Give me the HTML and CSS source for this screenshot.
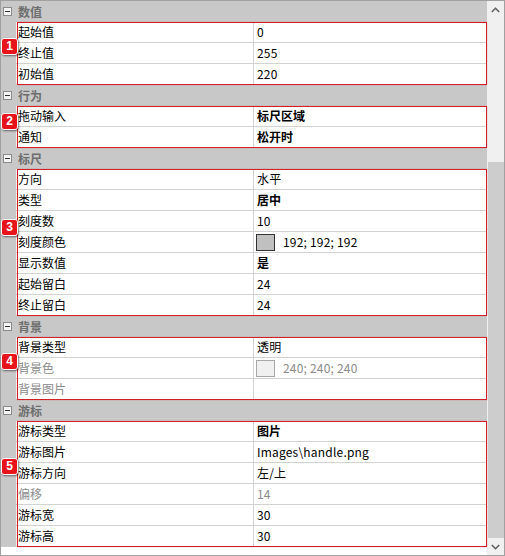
FILE: index.html
```html
<!DOCTYPE html>
<html lang="zh">
<head>
<meta charset="utf-8">
<link rel="stylesheet" href="styles.css">
</head>
<body>
<div class="frame">
  <div class="grid">
    <div class="cat"><span class="tog"></span><span class="ctitle">数值</span></div>
    <div class="group">
      <div class="row"><div class="gut"></div><div class="name">起始值</div><div class="val">0</div></div>
      <div class="row"><div class="gut"></div><div class="name">终止值</div><div class="val">255</div></div>
      <div class="row"><div class="gut"></div><div class="name">初始值</div><div class="val">220</div></div>
      <div class="mark"></div>
    </div>
    <div class="cat"><span class="tog"></span><span class="ctitle">行为</span></div>
    <div class="group">
      <div class="row"><div class="gut"></div><div class="name">拖动输入</div><div class="val bold">标尺区域</div></div>
      <div class="row"><div class="gut"></div><div class="name">通知</div><div class="val bold">松开时</div></div>
      <div class="mark"></div>
    </div>
    <div class="cat"><span class="tog"></span><span class="ctitle">标尺</span></div>
    <div class="group">
      <div class="row"><div class="gut"></div><div class="name">方向</div><div class="val">水平</div></div>
      <div class="row"><div class="gut"></div><div class="name">类型</div><div class="val bold">居中</div></div>
      <div class="row"><div class="gut"></div><div class="name">刻度数</div><div class="val">10</div></div>
      <div class="row"><div class="gut"></div><div class="name">刻度颜色</div><div class="val"><span class="swatch sw-192"></span>192; 192; 192</div></div>
      <div class="row"><div class="gut"></div><div class="name">显示数值</div><div class="val bold">是</div></div>
      <div class="row"><div class="gut"></div><div class="name">起始留白</div><div class="val">24</div></div>
      <div class="row"><div class="gut"></div><div class="name">终止留白</div><div class="val">24</div></div>
      <div class="mark"></div>
    </div>
    <div class="cat"><span class="tog"></span><span class="ctitle">背景</span></div>
    <div class="group">
      <div class="row"><div class="gut"></div><div class="name">背景类型</div><div class="val">透明</div></div>
      <div class="row dis"><div class="gut"></div><div class="name">背景色</div><div class="val"><span class="swatch sw-240"></span>240; 240; 240</div></div>
      <div class="row dis"><div class="gut"></div><div class="name">背景图片</div><div class="val"></div></div>
      <div class="mark"></div>
    </div>
    <div class="cat"><span class="tog"></span><span class="ctitle">游标</span></div>
    <div class="group">
      <div class="row"><div class="gut"></div><div class="name">游标类型</div><div class="val bold">图片</div></div>
      <div class="row"><div class="gut"></div><div class="name">游标图片</div><div class="val">Images\handle.png</div></div>
      <div class="row"><div class="gut"></div><div class="name">游标方向</div><div class="val">左/上</div></div>
      <div class="row dis"><div class="gut"></div><div class="name">偏移</div><div class="val">14</div></div>
      <div class="row"><div class="gut"></div><div class="name">游标宽</div><div class="val">30</div></div>
      <div class="row"><div class="gut"></div><div class="name">游标高</div><div class="val">30</div></div>
      <div class="mark"></div>
    </div>
  </div>
  <div class="scrollbar">
    <div class="sbtn">
      <svg width="9" height="6" viewBox="0 0 9 6"><polyline points="0.8,5 4.5,1.3 8.2,5" fill="none" stroke="#606060" stroke-width="1.6"/></svg>
    </div>
    <div class="track"></div>
    <div class="thumb"></div>
    <div class="sbtn">
      <svg width="9" height="6" viewBox="0 0 9 6"><polyline points="0.8,1 4.5,4.7 8.2,1" fill="none" stroke="#606060" stroke-width="1.6"/></svg>
    </div>
  </div>
  <div class="badge b1">1</div>
  <div class="badge b2">2</div>
  <div class="badge b3">3</div>
  <div class="badge b4">4</div>
  <div class="badge b5">5</div>
</div>
</body>
</html>
```

FILE: styles.css
```css
* { box-sizing: border-box; }
html, body { margin: 0; padding: 0; background: #ffffff; }
body {
  font-family: "Noto Sans CJK SC", "Noto Sans", sans-serif;
  font-size: 12px;
  color: #000;
}
.frame {
  position: relative;
  width: 505px;
  height: 556px;
  border: 1px solid #a0a0a0;
  display: flex;
  background: #fff;
}
.grid {
  width: 486px;
  display: flex;
  flex-direction: column;
  background: #fff;
}
.cat {
  height: 21px;
  background: #c8c8c8;
  display: flex;
  align-items: center;
}
.tog {
  width: 9px;
  height: 9px;
  margin-left: 2px;
  border: 1px solid #8a8a8a;
  background: #f4f4f4;
  position: relative;
}
.tog::after {
  content: "";
  position: absolute;
  left: 1px;
  right: 1px;
  top: 3px;
  height: 1px;
  background: #333;
}
.ctitle {
  margin-left: 6px;
  font-weight: bold;
  color: #6e6e6e;
  line-height: 20px;
}
.group { position: relative; }
.row {
  display: flex;
  height: 21px;
}
.gut {
  width: 15px;
  background: #c8c8c8;
}
.name {
  width: 238px;
  padding-left: 2px;
  border-bottom: 1px solid #d2d2d2;
  border-right: 1px solid #d2d2d2;
  line-height: 20px;
  white-space: nowrap;
}
.val {
  width: 233px;
  padding-left: 3px;
  border-bottom: 1px solid #d2d2d2;
  line-height: 20px;
  white-space: nowrap;
  display: flex;
  align-items: center;
  letter-spacing: 0.2px;
}
.bold { font-weight: bold; letter-spacing: 0; }
.dis .name, .dis .val { color: #8c8c8c; }
.swatch {
  width: 19px;
  height: 17px;
  margin-left: -1px;
  margin-right: 8px;
  border: 1px solid #333;
}
.sw-192 { background: #c0c0c0; }
.sw-240 { background: #f0f0f0; border-color: #a8a8a8; }
.mark {
  position: absolute;
  top: 0;
  bottom: 0;
  left: 16px;
  right: 0;
  border: 1px solid #d0212b;
  box-shadow: 0 0 1px rgba(230, 60, 60, 0.6);
  pointer-events: none;
}
.scrollbar {
  width: 17px;
  background: #f0f0f0;
  display: flex;
  flex-direction: column;
}
.sbtn {
  height: 17px;
  display: flex;
  align-items: center;
  justify-content: center;
}
.track { height: 144px; }
.thumb {
  height: 376px;
  margin-left: 1px;
  background: #cdcdcd;
}
.badge {
  position: absolute;
  left: 0;
  width: 17px;
  height: 17px;
  background: #e8141c;
  color: #fff;
  border: 1px solid #fff;
  border-radius: 3px;
  box-shadow: 1px 1px 2px rgba(0, 0, 0, 0.5);
  font-family: "Liberation Sans", Arial, sans-serif;
  font-weight: bold;
  font-size: 12px;
  line-height: 15px;
  text-align: center;
}
.b1 { top: 37px; }
.b2 { top: 112px; }
.b3 { top: 218px; }
.b4 { top: 352px; }
.b5 { top: 457px; }
```
